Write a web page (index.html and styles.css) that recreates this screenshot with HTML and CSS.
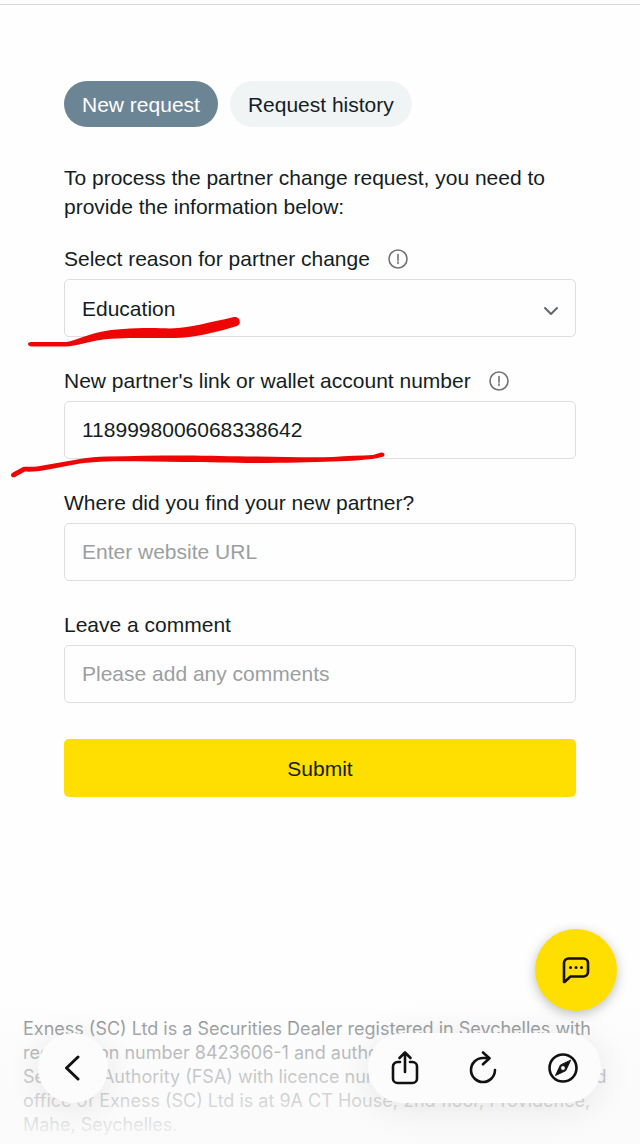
FILE: index.html
```html
<!DOCTYPE html>
<html lang="en">
<head>
    <meta charset="UTF-8">
    <meta name="viewport" content="width=device-width, initial-scale=1.0">
    <title>Partner change request</title>
    <link rel="stylesheet" href="styles.css">
</head>
<body>
    <main class="content">
        <div class="tabs">
            <button type="button" class="tab active">New request</button>
            <button type="button" class="tab">Request history</button>
        </div>

        <p class="intro">To process the partner change request, you need to provide the information below:</p>

        <form class="form">
            <div class="field">
                <div class="label-row">
                    <label for="reason">Select reason for partner change</label>
                    <svg class="info" viewBox="0 0 20 20"><circle cx="10" cy="10" r="9"/><path d="M10 5.500v5.800M10 13v1.500"/></svg>
                </div>
                <div class="select-wrap">
                    <select id="reason" class="control">
                        <option>Education</option>
                    </select>
                    <svg class="chevron" viewBox="0 0 16 10"><path d="M2 2l6 6 6-6"/></svg>
                </div>
                <svg class="mark mark-reason" viewBox="0 0 212 32"><path d="M3 26H38C46 25 58 19 72 16C86 13 104 12 122 12C134 12 142 13 150 12C162 11 180 7 206 1C212 0 214 8 209 10C196 14 180 18 168 20C156 22.500 140 22 122 22C104 22 86 22 72 24C60 26 48 30 38 30.500H3C-1 30-1 26 3 26Z"/></svg>
            </div>

            <div class="field">
                <div class="label-row">
                    <label for="partner">New partner's link or wallet account number</label>
                    <svg class="info" viewBox="0 0 20 20"><circle cx="10" cy="10" r="9"/><path d="M10 5.500v5.800M10 13v1.500"/></svg>
                </div>
                <input type="text" id="partner" class="control" value="1189998006068338642">
                <svg class="mark mark-partner" viewBox="0 0 376 28"><path d="M1 22L12 16C17 15 20 16.500 26 15.500L69 8C78 6.500 86 5.500 96 5.500C120 5 146 4.500 172 4.500C200 4.500 220 5.500 246 5.500C275 6 300 6.500 322 6C336 5 350 4.500 362 4L370 1.500C374 1 375 5 371 6C360 9 338 10 322 10.500C300 11 275 12 246 12C220 12 200 11 172 11C146 11 120 10 96 10.500C86 10.500 78 11.500 69 12.500L40 18C32 20 20 21 14 20.500L4 26C0 27-1 24 1 22Z"/></svg>
            </div>

            <div class="field">
                <div class="label-row">
                    <label for="website">Where did you find your new partner?</label>
                </div>
                <input type="text" id="website" class="control" placeholder="Enter website URL">
            </div>

            <div class="field">
                <div class="label-row">
                    <label for="comment">Leave a comment</label>
                </div>
                <input type="text" id="comment" class="control" placeholder="Please add any comments">
            </div>

            <button type="submit" class="submit">Submit</button>
        </form>
    </main>

    <footer class="footer">
        <p>Exness (SC) Ltd is a Securities Dealer registered in Seychelles with registration number 8423606-1 and authorised by the Financial<br>Services Authority (FSA) with licence number SD025. The registered office of Exness (SC) Ltd is at 9A CT House, 2nd floor, Providence, Mahe, Seychelles.</p>
    </footer>

    <button type="button" class="chat" aria-label="Chat">
        <svg viewBox="0 0 28 28"><path d="M2 26V7a4.500 4.500 0 0 1 4.500-4.500h15A4.500 4.500 0 0 1 26 7v9a4.500 4.500 0 0 1-4.500 4.500H8.500L2.500 26Z"/><path class="dots" d="M8.500 11.500h.01M14 11.500h.01M19.500 11.500h.01"/></svg>
    </button>

    <nav class="toolbar">
        <button type="button" class="back" aria-label="Back">
            <svg width="16" height="26" viewBox="0 0 16 26"><path d="M13 2L1.500 13 13 24"/></svg>
        </button>
        <div class="actions">
            <button type="button" aria-label="Share">
                <svg width="28" height="36" viewBox="0 0 28 36"><path d="M9 12H6.500A4.500 4.500 0 0 0 2 16.500v12A4.500 4.500 0 0 0 6.500 33h15a4.500 4.500 0 0 0 4.500-4.500v-12a4.500 4.500 0 0 0-4.500-4.500H19M14 22V3M8.500 8L14 2.500 19.500 8"/></svg>
            </button>
            <button type="button" aria-label="Reload">
                <svg width="28" height="36" viewBox="0 0 28 36"><path d="M26 20a12 12 0 1 1-12-12h6M14 2.500l6.500 5.800-6.500 6"/></svg>
            </button>
            <button type="button" aria-label="Open in browser">
                <svg width="32" height="32" viewBox="0 0 32 32"><circle cx="16" cy="16" r="13.500"/><path class="needle" d="M23.500 8.500L18.700 18.700 8.500 23.500 13.300 13.300Z"/><circle class="hub" cx="16" cy="16" r="2.500"/></svg>
            </button>
        </div>
    </nav>
</body>
</html>
```
FILE: styles.css
```css
* {
    margin: 0;
    padding: 0;
    box-sizing: border-box;
}
body {
    display: flex;
    flex-direction: column;
    min-height: 100vh;
    background: #fefefe;
    color: #141d22;
    font-family: "Liberation Sans", Arial, sans-serif;
    font-size: 21px;
    line-height: 29px;
}
body::before {
    content: "";
    height: 1px;
    margin-top: 4px;
    background: #d8d8d8;
}
button, input, select {
    font: inherit;
    color: inherit;
}
button {
    border: none;
    cursor: pointer;
}
svg {
    display: block;
    fill: none;
    stroke: currentColor;
    stroke-linecap: round;
    stroke-linejoin: round;
}
.content {
    padding: 76px 64px 0;
}
.tabs {
    display: flex;
    gap: 12px;
    margin-bottom: 36px;
}
.tab {
    height: 46px;
    padding: 0 18px;
    border-radius: 23px;
    background: #f0f4f5;
}
.tab.active {
    background: #6c8595;
    color: #fff;
}
.intro {
    margin-bottom: 23px;
}
.field {
    position: relative;
    margin-bottom: 29px;
}
.label-row {
    display: flex;
    align-items: center;
    gap: 18px;
    margin-bottom: 6px;
}
.info {
    width: 20px;
    height: 20px;
    color: #707375;
    stroke-width: 1.6;
}
.control {
    display: block;
    width: 100%;
    height: 58px;
    padding: 0 17px;
    border: 1px solid #dcdfe0;
    border-radius: 5px;
    background: #fefefe;
    appearance: none;
    outline: none;
}
.control::placeholder {
    color: #9b9fa1;
    opacity: 1;
}
.select-wrap {
    position: relative;
}
.chevron {
    position: absolute;
    top: 27px;
    right: 17px;
    width: 16px;
    height: 10px;
    color: #63676a;
    stroke-width: 2;
    pointer-events: none;
}

/* red marker strokes over the fields */
.mark {
    position: absolute;
    fill: #ee0505;
    stroke: none;
    pointer-events: none;
}
.mark-reason {
    left: -36px;
    bottom: -11px;
    width: 212px;
    height: 32px;
}
.mark-partner {
    left: -53px;
    bottom: -20px;
    width: 376px;
    height: 28px;
}

.submit {
    width: 100%;
    height: 58px;
    margin-top: 7px;
    border-radius: 5px;
    background: #ffde02;
}
.footer {
    position: relative;
    margin-top: auto;
    padding: 24px 23px 7px;
    color: #73797c;
    font-family: Inter, sans-serif;
    font-size: 18px;
    line-height: 24px;
}
.footer::after {
    content: "";
    position: absolute;
    inset: 0;
    background: linear-gradient(rgba(250, 250, 250, 0), rgba(250, 250, 250, 0.5) 38%, rgba(250, 250, 250, 0.8) 85%, #fafafa);
}
.chat {
    position: fixed;
    right: 23px;
    bottom: 133px;
    display: grid;
    place-items: center;
    width: 82px;
    height: 82px;
    border-radius: 50%;
    background: #ffde02;
    box-shadow: 0 3px 12px rgba(0, 0, 0, 0.25);
    color: #141005;
}
.chat svg {
    width: 28px;
    height: 28px;
    stroke-width: 2.6;
}
.chat .dots {
    stroke-width: 3;
}
.toolbar {
    position: fixed;
    right: 39px;
    bottom: 41px;
    left: 38px;
    display: flex;
    justify-content: space-between;
    color: #111;
}
.toolbar button {
    background: none;
}
.toolbar svg {
    stroke-width: 2.6;
}
.toolbar .back, .actions {
    height: 70px;
    border-radius: 35px;
    background: #fcfcfc;
    box-shadow: 0 4px 36px rgba(0, 0, 0, 0.09);
}
.toolbar .back {
    display: grid;
    place-items: center;
    width: 70px;
}
.toolbar .back svg {
    stroke-width: 3;
}
.actions {
    display: flex;
    align-items: center;
    gap: 50px;
    padding: 0 22px 0 23px;
}
.toolbar .needle, .toolbar .hub {
    stroke-width: 1;
}
.needle {
    fill: currentColor;
}
.hub {
    fill: #fcfcfc;
}
```
